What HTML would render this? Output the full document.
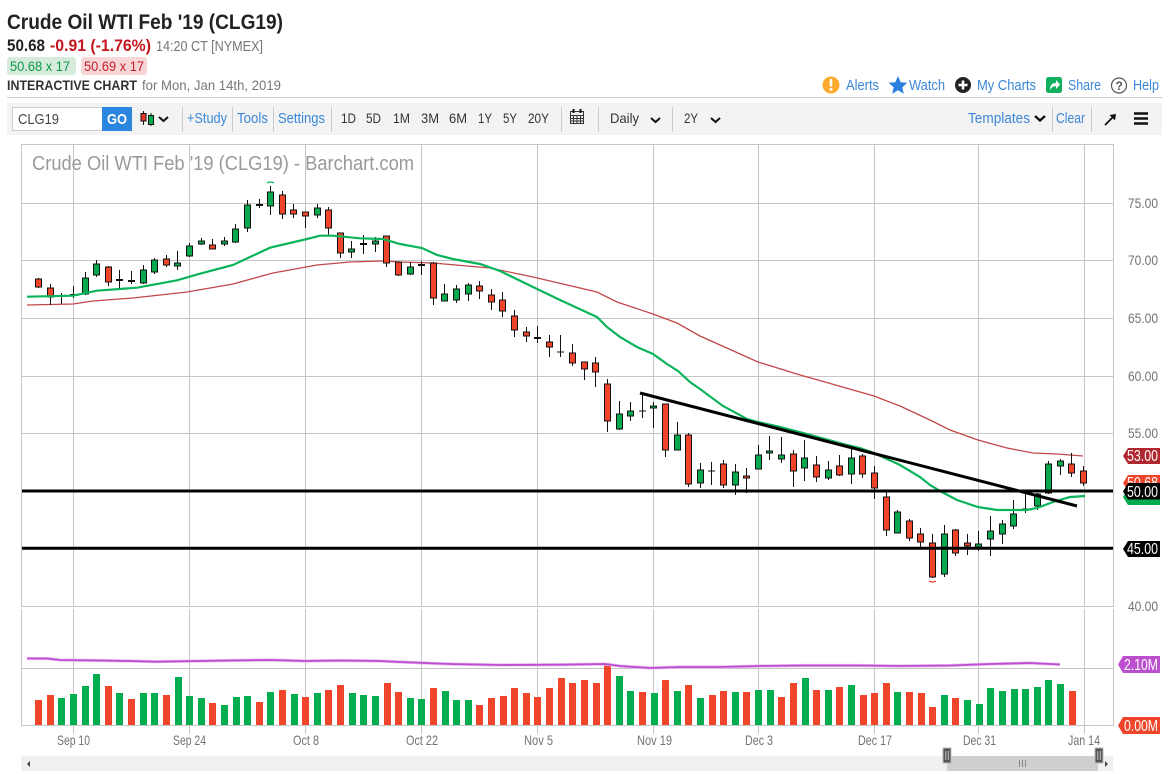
<!DOCTYPE html>
<html><head><meta charset="utf-8"><title>Crude Oil WTI Feb '19 (CLG19)</title>
<style>
html,body{margin:0;padding:0;background:#fff;overflow:hidden}
svg{display:block}
text{font-family:"Liberation Sans",Arial,sans-serif}
.a{fill:#737373;font-size:14px}
.l{fill:#3b87d8;font-size:14.500px}
.t{fill:#333;font-size:14px}
.w{fill:#fff;font-size:15.500px}
</style></head><body>
<svg width="1172" height="774" viewBox="0 0 1172 774" xmlns="http://www.w3.org/2000/svg">
<rect width="1172" height="774" fill="#fff"/>
<!-- header -->
<text x="7" y="29" font-size="21.500" font-weight="700" fill="#222" textLength="276" lengthAdjust="spacingAndGlyphs">Crude Oil WTI Feb '19 (CLG19)</text>
<text x="7" y="51" font-size="17" font-weight="700" fill="#222" textLength="38" lengthAdjust="spacingAndGlyphs">50.68</text>
<text x="50" y="51" font-size="17" font-weight="700" fill="#c4161c" textLength="101" lengthAdjust="spacingAndGlyphs">-0.91 (-1.76%)</text>
<text x="156" y="51" font-size="14.500" fill="#777" textLength="107" lengthAdjust="spacingAndGlyphs">14:20 CT [NYMEX]</text>
<rect x="7" y="57" width="69" height="18" rx="3" fill="#d6ebdb"/>
<rect x="81" y="57" width="66" height="18" rx="3" fill="#f6d6d6"/>
<text x="10" y="71" font-size="14" fill="#0a9a4a" textLength="60" lengthAdjust="spacingAndGlyphs">50.68 x 17</text>
<text x="84" y="71" font-size="14" fill="#c4202a" textLength="60" lengthAdjust="spacingAndGlyphs">50.69 x 17</text>
<text x="7" y="90" font-size="14" font-weight="700" fill="#333" textLength="130" lengthAdjust="spacingAndGlyphs">INTERACTIVE CHART</text>
<text x="142" y="90" font-size="14" fill="#777" textLength="139" lengthAdjust="spacingAndGlyphs">for Mon, Jan 14th, 2019</text>
<!-- top right links -->
<circle cx="831" cy="85" r="8.500" fill="#fca92c"/><rect x="829.700" y="79" width="2.600" height="7.500" fill="#fff"/><rect x="829.700" y="88" width="2.600" height="2.600" fill="#fff"/>
<text x="846" y="90" class="l" textLength="33" lengthAdjust="spacingAndGlyphs">Alerts</text>
<path d="M898 76l2.700 6.200 6.600.6-5 4.400 1.500 6.600-5.800-3.500-5.800 3.500 1.500-6.600-5-4.400 6.600-.6z" fill="#2a80dc"/>
<text x="909" y="90" class="l" textLength="36" lengthAdjust="spacingAndGlyphs">Watch</text>
<circle cx="963" cy="85" r="8" fill="#222"/><path d="M963 80.500v9M958.500 85h9" stroke="#fff" stroke-width="2.600"/>
<text x="977" y="90" class="l" textLength="59" lengthAdjust="spacingAndGlyphs">My Charts</text>
<rect x="1046" y="77" width="16" height="16" rx="2.500" fill="#10b060"/><path d="M1050 90c0-5 2-7 6-7v-3l4 4.500-4 4.500v-3c-3 0-4.500 1.500-6 4z" fill="#fff"/>
<text x="1068" y="90" class="l" textLength="33" lengthAdjust="spacingAndGlyphs">Share</text>
<circle cx="1119" cy="85.500" r="7.500" fill="none" stroke="#555" stroke-width="1.200"/>
<text x="1115.500" y="90" font-size="12" font-weight="700" fill="#555">?</text>
<text x="1133" y="90" class="l" textLength="26" lengthAdjust="spacingAndGlyphs">Help</text>
<rect x="7" y="97" width="1155" height="1" fill="#ccc"/>
<!-- toolbar -->
<rect x="7" y="103" width="1155" height="32" fill="#f3f3f3"/>
<rect x="12.500" y="107.500" width="90" height="23" fill="#fff" stroke="#ccc"/>
<text x="18" y="124" font-size="15" fill="#444" textLength="41" lengthAdjust="spacingAndGlyphs">CLG19</text>
<rect x="102" y="107" width="30" height="24" fill="#2b86e0"/>
<text x="107" y="124" font-size="15" font-weight="700" fill="#fff" textLength="20" lengthAdjust="spacingAndGlyphs">GO</text>
<path d="M143.500 111v14M151 113v13" stroke="#111"/>
<rect x="141" y="113.500" width="5" height="7.500" fill="#e8352a" stroke="#111"/><rect x="148.500" y="115.500" width="5" height="9" fill="#06a94d" stroke="#111"/>
<path d="M159 117l4.500 4 4.500-4" fill="none" stroke="#111" stroke-width="2"/>
<path d="M182.500 107v25M232.500 107v25M273.500 107v25M331.500 107v25M561.500 107v25M598.500 107v25M672.500 107v25M1052.500 107v25M1091.500 107v25" stroke="#ccc"/>
<text x="187" y="123" class="l" textLength="40" lengthAdjust="spacingAndGlyphs">+Study</text>
<text x="237" y="123" class="l" textLength="31" lengthAdjust="spacingAndGlyphs">Tools</text>
<text x="278" y="123" class="l" textLength="47" lengthAdjust="spacingAndGlyphs">Settings</text>
<text x="341" y="123" class="t" textLength="15" lengthAdjust="spacingAndGlyphs">1D</text>
<text x="366" y="123" class="t" textLength="15" lengthAdjust="spacingAndGlyphs">5D</text>
<text x="393" y="123" class="t" textLength="17" lengthAdjust="spacingAndGlyphs">1M</text>
<text x="421" y="123" class="t" textLength="18" lengthAdjust="spacingAndGlyphs">3M</text>
<text x="449" y="123" class="t" textLength="18" lengthAdjust="spacingAndGlyphs">6M</text>
<text x="478" y="123" class="t" textLength="14" lengthAdjust="spacingAndGlyphs">1Y</text>
<text x="503" y="123" class="t" textLength="14" lengthAdjust="spacingAndGlyphs">5Y</text>
<text x="528" y="123" class="t" textLength="21" lengthAdjust="spacingAndGlyphs">20Y</text>
<path d="M570.500 111.500h13v12h-13zM570.500 115.500h13M570.500 118.500h13M570.500 121h13M573.500 115.500v8M577 115.500v8M580.500 115.500v8" fill="#eee" stroke="#333"/>
<path d="M573.500 109v4M580.500 109v4" stroke="#111" stroke-width="2"/>
<text x="610" y="123" class="t" textLength="29" lengthAdjust="spacingAndGlyphs">Daily</text>
<path d="M651 118l4.500 4 4.500-4M711 118l4.500 4 4.500-4" fill="none" stroke="#111" stroke-width="2"/>
<text x="684" y="123" class="t" textLength="14" lengthAdjust="spacingAndGlyphs">2Y</text>
<text x="968" y="123" class="l" textLength="62" lengthAdjust="spacingAndGlyphs">Templates</text>
<path d="M1035 116l5 4.500 5-4.500" fill="none" stroke="#111" stroke-width="2.400"/>
<text x="1056" y="123" class="l" textLength="29" lengthAdjust="spacingAndGlyphs">Clear</text>
<path d="M1105 125l9-9" stroke="#111" stroke-width="1.800"/><path d="M1116 114l-6.500 1 5.500 5.500z" fill="#111"/>
<path d="M1134 113.500h14M1134 118.500h14M1134 123.500h14" stroke="#111" stroke-width="2.400"/>
<!-- grid -->
<path d="M21.500 144.500H1113.500V606.500H21.500zM21.500 609V725.500H1113.500V609" fill="none" stroke="#c6c6c6"/>
<path d="M22 203.500H1113M22 260.500H1113M22 318.500H1113M22 376.500H1113M22 433.500H1113M22 668.500H1113" stroke="#c6c6c6"/>
<path d="M73.500 145V606M189.500 145V606M305.500 145V606M421.500 145V606M537.500 145V606M653.500 145V606M758.500 145V606M874.500 145V606M978.500 145V606M1084.500 145V606M73.500 609V734M189.500 609V734M305.500 609V734M421.500 609V734M537.500 609V734M653.500 609V734M758.500 609V734M874.500 609V734M978.500 609V734M1084.500 609V734" stroke="#c6c6c6"/>
<text x="32" y="170" font-size="20" fill="#999" textLength="382" lengthAdjust="spacingAndGlyphs">Crude Oil WTI Feb '19 (CLG19) - Barchart.com</text>
<!-- volume -->
<path fill="#f0452a" d="M35 700h7V725h-7zM47 695h7V725h-7zM105 686h7V725h-7zM128 699h7V725h-7zM163 695h7V725h-7zM209 703h7V725h-7zM256 702h7V725h-7zM279 690h7V725h-7zM302 697h7V725h-7zM325 690h7V725h-7zM337 685h7V725h-7zM384 683h7V725h-7zM395 692h7V725h-7zM430 688h7V725h-7zM476 705h7V725h-7zM488 698h7V725h-7zM500 696h7V725h-7zM511 688h7V725h-7zM523 693h7V725h-7zM534 697h7V725h-7zM546 688h7V725h-7zM558 678h7V725h-7zM569 683h7V725h-7zM581 680h7V725h-7zM593 683h7V725h-7zM604 665h7V725h-7zM639 692h7V725h-7zM662 680h7V725h-7zM685 685h7V725h-7zM709 695h7V725h-7zM720 691h7V725h-7zM743 692h7V725h-7zM778 697h7V725h-7zM790 683h7V725h-7zM813 690h7V725h-7zM836 687h7V725h-7zM860 695h7V725h-7zM871 693h7V725h-7zM883 683h7V725h-7zM906 692h7V725h-7zM918 693h7V725h-7zM929 707h7V725h-7zM952 698h7V725h-7zM1069 691h7V725h-7z"/>
<path fill="#00ae4f" d="M58 698h7V725h-7zM70 694h7V725h-7zM82 686h7V725h-7zM93 674h7V725h-7zM116 693h7V725h-7zM140 693h7V725h-7zM151 693h7V725h-7zM175 677h7V725h-7zM186 696h7V725h-7zM198 698h7V725h-7zM221 705h7V725h-7zM233 697h7V725h-7zM244 696h7V725h-7zM267 692h7V725h-7zM291 694h7V725h-7zM314 693h7V725h-7zM349 693h7V725h-7zM360 695h7V725h-7zM372 696h7V725h-7zM407 698h7V725h-7zM418 699h7V725h-7zM442 691h7V725h-7zM453 700h7V725h-7zM465 700h7V725h-7zM616 676h7V725h-7zM627 691h7V725h-7zM651 693h7V725h-7zM674 691h7V725h-7zM697 698h7V725h-7zM732 692h7V725h-7zM755 690h7V725h-7zM767 690h7V725h-7zM802 678h7V725h-7zM825 690h7V725h-7zM848 685h7V725h-7zM894 692h7V725h-7zM941 695h7V725h-7zM964 700h7V725h-7zM976 704h7V725h-7zM987 688h7V725h-7zM999 691h7V725h-7zM1011 689h7V725h-7zM1022 689h7V725h-7zM1034 687h7V725h-7zM1045 680h7V725h-7zM1057 684h7V725h-7z"/>
<polyline fill="none" stroke="#e8bdf0" stroke-width="3.200" points="27,658.500 47,658.500 60,660 100,660.500 130,661 155,661.700 230,660.500 270,660 306,661 340,660.500 380,661 400,662 450,664 500,665 560,664.700 605,664 620,666 650,668 680,667 720,667 760,666 800,665.500 860,665.500 900,666 950,665.500 990,664 1030,663 1060,664.500"/>
<polyline fill="none" stroke="#bb4fcf" stroke-width="1.800" points="27,658.500 47,658.500 60,660 100,660.500 130,661 155,661.700 230,660.500 270,660 306,661 340,660.500 380,661 400,662 450,664 500,665 560,664.700 605,664 620,666 650,668 680,667 720,667 760,666 800,665.500 860,665.500 900,666 950,665.500 990,664 1030,663 1060,664.500"/>
<!-- moving averages -->
<polyline fill="none" stroke="#c2474a" stroke-width="1.300" points="27,305 73,304 93,301 133,298 187,292 233,284 273,273 317,265 350,262 383,261 400,262 433,263 490,268 533,277 597,292 617,302 653,314 677,323 700,336 758,362 800,375 818,380 874,396 900,406 930,420 950,430 978,440 1007,448 1033,453 1057,454 1083,456"/>
<!-- candles -->
<path fill="none" stroke="#111" d="M38.500 278V288M50.500 284V305M61.500 293V304M73.500 286V298M85.500 272V295M96.500 260V277M108.500 266V286M119.500 270V289M131.500 271V284M143.500 265V284M154.500 258V274M166.500 255V267M177.500 251V270M189.500 243V257M201.500 238V245M212.500 239V249M224.500 237V246M235.500 224V243M247.500 200V232M259.500 199V208M270.500 186V215M282.500 191V219M293.500 204V218M305.500 212V228M317.500 204V218M328.500 207V235M340.500 233V258M351.500 241V258M363.500 235V254M375.500 237V252M386.500 236V267M398.500 262V276M410.500 262V275M421.500 261V275M433.500 262V305M444.500 284V301M456.500 285V303M468.500 283V301M479.500 281V299M491.500 289V310M502.500 292V317M514.500 310V337M526.500 327V342M537.500 326V343M549.500 335V357M560.500 335V357M572.500 344V366M584.500 362V380M595.500 357V387M607.500 379V432M619.500 401V430M630.500 402V421M642.500 393V418M653.500 402V428M665.500 404V457M677.500 422V450M688.500 433V487M700.500 463V488M711.500 462V485M723.500 460V488M735.500 464V495M746.500 468V493M758.500 445V469M769.500 436V460M781.500 437V463M793.500 450V487M804.500 440V481M816.500 456V482M828.500 461V480M839.500 455V476M851.500 449V484M862.500 454V478M874.500 466V499M886.500 492V536M897.500 510V533M909.500 519V541M920.500 528V547M932.500 534V578M944.500 525V577M955.500 529V556M967.500 534V555M978.500 531V551M990.500 516V556M1002.500 520V544M1013.500 500V529M1025.500 493V513M1037.500 493V510M1048.500 461V494M1060.500 459V475M1071.500 453V477M1083.500 466V486"/>
<path fill="none" stroke="#111" stroke-width="2" d="M58 296h7M70 295h7M116 280h7M128 281h7M256 205h7M360 244h7M418 265h7M534 338h7"/>
<path fill="none" stroke="#111" stroke-width="1" d="M557 352h7M639 411h7M708 471h7M1022 509h7"/>
<path fill="#f0452a" stroke="#111" d="M35.500 279h6v8h-6zM47.500 288h6v9h-6zM105.500 267h6v15h-6zM163.500 259h6v6h-6zM209.500 245h6v4h-6zM279.500 195h6v19h-6zM290.500 210h6v4h-6zM302.500 212h6v4h-6zM325.500 210h6v18h-6zM337.500 233h6v20h-6zM383.500 236h6v27h-6zM395.500 262h6v13h-6zM430.500 263h6v35h-6zM476.500 286h6v5h-6zM488.500 295h6v7h-6zM499.500 300h6v11h-6zM511.500 316h6v14h-6zM523.500 332h6v4h-6zM546.500 342h6v5h-6zM569.500 353h6v10h-6zM581.500 362h6v7h-6zM592.500 363h6v9h-6zM604.500 384h6v37h-6zM662.500 404h6v46h-6zM685.500 435h6v49h-6zM720.500 464h6v21h-6zM743.500 476h6v2h-6zM790.500 454h6v17h-6zM813.500 465h6v12h-6zM836.500 466h6v9h-6zM859.500 456h6v18h-6zM871.500 473h6v15h-6zM883.500 497h6v33h-6zM906.500 521h6v17h-6zM917.500 534h6v8h-6zM929.500 543h6v34h-6zM952.500 530h6v23h-6zM964.500 543h6v3h-6zM1068.500 464h6v9h-6zM1080.500 471h6v12h-6z"/>
<path fill="#06a94d" stroke="#111" d="M82.500 278h6v16h-6zM93.500 264h6v11h-6zM140.500 270h6v13h-6zM151.500 260h6v12h-6zM174.500 263h6v3h-6zM186.500 246h6v10h-6zM198.500 241h6v3h-6zM221.500 241h6v3h-6zM232.500 229h6v13h-6zM244.500 205h6v23h-6zM267.500 192h6v14h-6zM314.500 208h6v7h-6zM348.500 249h6v3h-6zM372.500 241h6v3h-6zM407.500 267h6v7h-6zM441.500 294h6v7h-6zM453.500 289h6v11h-6zM465.500 285h6v9h-6zM616.500 414h6v15h-6zM627.500 411h6v5h-6zM650.500 406h6v2h-6zM674.500 435h6v15h-6zM697.500 470h6v13h-6zM732.500 472h6v13h-6zM755.500 455h6v14h-6zM766.500 451h6v2h-6zM778.500 455h6v4h-6zM801.500 458h6v10h-6zM825.500 470h6v8h-6zM848.500 458h6v16h-6zM894.500 512h6v21h-6zM941.500 534h6v40h-6zM975.500 544h6v3h-6zM987.500 531h6v8h-6zM999.500 524h6v10h-6zM1010.500 514h6v12h-6zM1034.500 494h6v12h-6zM1045.500 464h6v29h-6zM1057.500 461h6v5h-6z"/>
<path d="M267 183q3.500-2 7 0" fill="none" stroke="#0ab45a" stroke-width="1.200"/>
<path d="M929 581q3.500 2 7 0" fill="none" stroke="#e8352a" stroke-width="1.200"/>
<polyline fill="none" stroke="#0ab45a" stroke-width="2.200" points="27,296.700 73,295.700 97,290.700 137,287.700 177,280.300 200,273.700 233,265 270,247.700 307,239 320,235.700 333,235.700 360,238.300 383,239 400,244 422,248 437,255 453,259 480,264 500,271 533,287 560,300 597,317 607,327 620,337 637,347 653,354 667,364 678,371 690,382 700,389 723,406 747,419 758,422 780,427 803,433 847,445 860,448 874,453 900,465 920,477 930,485 940,491 957,500 978,507 997,510 1027,510 1037,508 1053,502 1070,497 1085,496"/>
<!-- drawn lines -->
<path d="M640 393L1077 506" stroke="#000" stroke-width="3" fill="none"/>
<path d="M22 491H1113M22 548.300H1113" stroke="#000" stroke-width="3" fill="none"/>
<!-- axis labels -->
<text x="1128" y="208" class="a" textLength="30" lengthAdjust="spacingAndGlyphs">75.00</text>
<text x="1128" y="265" class="a" textLength="30" lengthAdjust="spacingAndGlyphs">70.00</text>
<text x="1128" y="323" class="a" textLength="30" lengthAdjust="spacingAndGlyphs">65.00</text>
<text x="1128" y="381" class="a" textLength="30" lengthAdjust="spacingAndGlyphs">60.00</text>
<text x="1128" y="438" class="a" textLength="30" lengthAdjust="spacingAndGlyphs">55.00</text>
<text x="1128" y="611" class="a" textLength="30" lengthAdjust="spacingAndGlyphs">40.00</text>
<polygon points="1123,456 1128,448 1160,448 1160,464 1128,464" fill="#b0282f"/>
<text x="1127" y="461" class="w" textLength="31" lengthAdjust="spacingAndGlyphs">53.00</text>
<polygon points="1123,483 1128,475 1160,475 1160,491 1128,491" fill="#f0452a"/>
<text x="1127" y="488" class="w" textLength="31" lengthAdjust="spacingAndGlyphs">50.68</text>
<polygon points="1123,497 1128,489 1160,489 1160,505 1128,505" fill="#06a94d"/>
<polygon points="1123,491.500 1128,483 1160,483 1160,499.500 1128,499.500" fill="#000"/>
<text x="1127" y="497" class="w" textLength="31" lengthAdjust="spacingAndGlyphs">50.00</text>
<polygon points="1123,549 1128,541 1160,541 1160,557 1128,557" fill="#000"/>
<text x="1127" y="554" class="w" textLength="31" lengthAdjust="spacingAndGlyphs">45.00</text>
<polygon points="1118,664.500 1123,656 1160,656 1160,673 1123,673" fill="#bb4fcf"/>
<text x="1124" y="670" class="w" textLength="34" lengthAdjust="spacingAndGlyphs">2.10M</text>
<polygon points="1118,725.500 1123,717 1160,717 1160,734 1123,734" fill="#f0452a"/>
<text x="1124" y="731" class="w" textLength="34" lengthAdjust="spacingAndGlyphs">0.00M</text>
<text x="57" y="745" class="a" textLength="33" lengthAdjust="spacingAndGlyphs">Sep 10</text>
<text x="173" y="745" class="a" textLength="33" lengthAdjust="spacingAndGlyphs">Sep 24</text>
<text x="293" y="745" class="a" textLength="26" lengthAdjust="spacingAndGlyphs">Oct 8</text>
<text x="406" y="745" class="a" textLength="32" lengthAdjust="spacingAndGlyphs">Oct 22</text>
<text x="524" y="745" class="a" textLength="29" lengthAdjust="spacingAndGlyphs">Nov 5</text>
<text x="637" y="745" class="a" textLength="35" lengthAdjust="spacingAndGlyphs">Nov 19</text>
<text x="745" y="745" class="a" textLength="28" lengthAdjust="spacingAndGlyphs">Dec 3</text>
<text x="858" y="745" class="a" textLength="34" lengthAdjust="spacingAndGlyphs">Dec 17</text>
<text x="963" y="745" class="a" textLength="33" lengthAdjust="spacingAndGlyphs">Dec 31</text>
<text x="1068" y="745" class="a" textLength="32" lengthAdjust="spacingAndGlyphs">Jan 14</text>
<!-- scrollbar -->
<rect x="21" y="756" width="1092" height="15" fill="#f0f0f0"/>
<rect x="947" y="756" width="151" height="15" fill="#cfcfcf"/>
<path d="M27 764l3-3v6zM1108 764l-3-3v6z" fill="#444"/>
<path d="M1019.500 760v7M1022.500 760v7M1025.500 760v7" stroke="#888"/>
<rect x="943" y="748" width="8" height="15" fill="#555" stroke="#bbb"/>
<rect x="1095" y="748" width="8" height="15" fill="#555" stroke="#bbb"/>
<path d="M945.800 751v9M948.200 751v9M1097.800 751v9M1100.200 751v9" stroke="#ddd" stroke-width=".8"/>
</svg>
</body></html>
